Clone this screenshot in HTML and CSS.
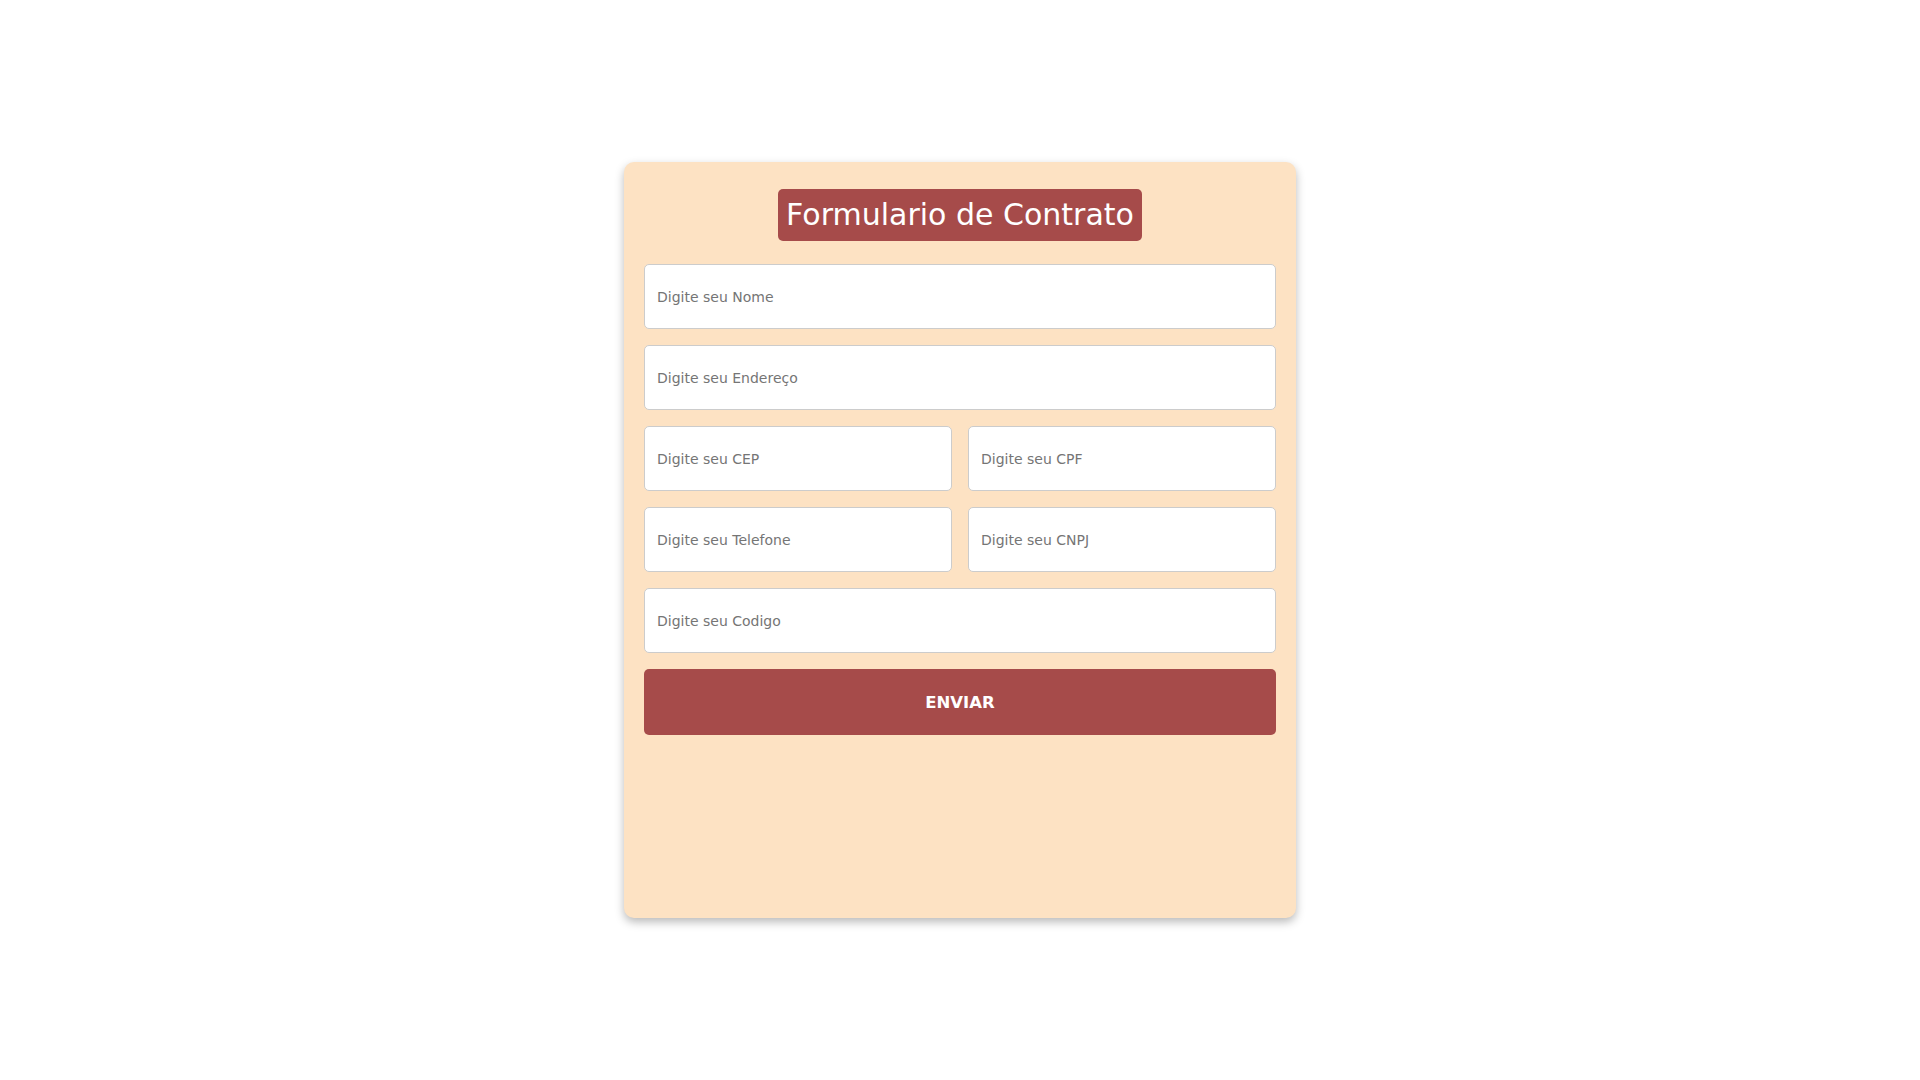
FILE: index.html
```html
<!DOCTYPE html>
<html lang="pt-BR">
<head>
<meta charset="utf-8">
<title>Formulario de Contrato</title>
<link rel="stylesheet" href="styles.css">
</head>
<body>
<main class="page">
  <section class="card">
    <div class="title-wrap">
      <h1 class="title">Formulario de Contrato</h1>
    </div>
    <form class="form">
      <input class="field full" type="text" placeholder="Digite seu Nome">
      <input class="field full" type="text" placeholder="Digite seu Endereço">
      <input class="field" type="text" placeholder="Digite seu CEP">
      <input class="field" type="text" placeholder="Digite seu CPF">
      <input class="field" type="text" placeholder="Digite seu Telefone">
      <input class="field" type="text" placeholder="Digite seu CNPJ">
      <input class="field full" type="text" placeholder="Digite seu Codigo">
      <button class="submit full" type="button">ENVIAR</button>
    </form>
  </section>
</main>
</body>
</html>
```
FILE: styles.css
```css
* { box-sizing: border-box; }
html, body { margin: 0; padding: 0; background: #ffffff; }
body { font-family: "DejaVu Sans", Verdana, sans-serif; }
.page {
  width: 1920px;
  height: 1080px;
  display: flex;
  align-items: center;
  justify-content: center;
}
.card {
  width: 672px;
  height: 756px;
  background: #fde2c3;
  border-radius: 10px;
  box-shadow: 0 4px 10px rgba(0, 0, 0, 0.28);
  padding: 27px 20px 20px;
}
.title-wrap {
  display: flex;
  justify-content: center;
  margin-bottom: 23px;
}
.title {
  margin: 0;
  background: #a64b4a;
  color: #ffffff;
  font-weight: normal;
  font-size: 30px;
  line-height: 34px;
  padding: 9px 8px;
  border-radius: 5px;
}
.form {
  display: grid;
  grid-template-columns: 1fr 1fr;
  gap: 16px;
}
.full { grid-column: 1 / -1; }
.field {
  height: 65px;
  border: 1px solid #cccccc;
  border-radius: 5px;
  background: #ffffff;
  padding: 0 12px;
  font-family: "DejaVu Sans", Verdana, sans-serif;
  font-size: 14px;
  color: #333333;
  outline: none;
}
.field::placeholder { color: #757575; }
.submit {
  height: 66px;
  border: none;
  border-radius: 5px;
  background: #a64b4a;
  color: #ffffff;
  font-family: "DejaVu Sans", Verdana, sans-serif;
  font-weight: bold;
  font-size: 16.5px;
  cursor: pointer;
}
```
